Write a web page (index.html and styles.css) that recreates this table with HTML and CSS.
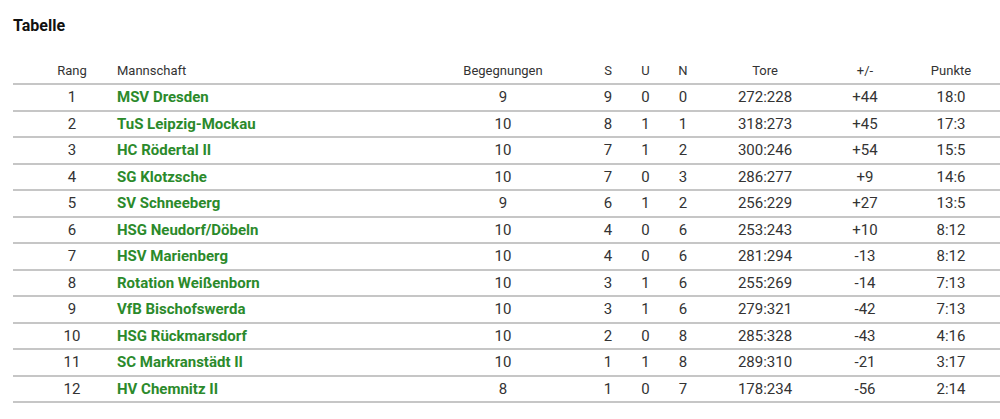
FILE: index.html
```html
<!DOCTYPE html>
<html lang="de">
<head>
<meta charset="utf-8">
<title>Tabelle</title>
<link rel="stylesheet" href="styles.css">
</head>
<body>
<div class="page">
  <h2 class="title">Tabelle</h2>
  <table class="standings">
    <colgroup>
      <col class="c-rank"><col class="c-team"><col class="c-games"><col class="c-s"><col class="c-u"><col class="c-n"><col class="c-goals"><col class="c-diff"><col class="c-pts">
    </colgroup>
    <thead>
      <tr>
        <th class="rank">Rang</th>
        <th class="team">Mannschaft</th>
        <th class="games">Begegnungen</th>
        <th>S</th>
        <th>U</th>
        <th>N</th>
        <th>Tore</th>
        <th>+/-</th>
        <th>Punkte</th>
      </tr>
    </thead>
    <tbody>
      <tr><td class="rank">1</td><td class="team">MSV Dresden</td><td class="games">9</td><td>9</td><td>0</td><td>0</td><td>272:228</td><td>+44</td><td>18:0</td></tr>
      <tr><td class="rank">2</td><td class="team">TuS Leipzig-Mockau</td><td class="games">10</td><td>8</td><td>1</td><td>1</td><td>318:273</td><td>+45</td><td>17:3</td></tr>
      <tr><td class="rank">3</td><td class="team">HC Rödertal II</td><td class="games">10</td><td>7</td><td>1</td><td>2</td><td>300:246</td><td>+54</td><td>15:5</td></tr>
      <tr><td class="rank">4</td><td class="team">SG Klotzsche</td><td class="games">10</td><td>7</td><td>0</td><td>3</td><td>286:277</td><td>+9</td><td>14:6</td></tr>
      <tr><td class="rank">5</td><td class="team">SV Schneeberg</td><td class="games">9</td><td>6</td><td>1</td><td>2</td><td>256:229</td><td>+27</td><td>13:5</td></tr>
      <tr><td class="rank">6</td><td class="team">HSG Neudorf/Döbeln</td><td class="games">10</td><td>4</td><td>0</td><td>6</td><td>253:243</td><td>+10</td><td>8:12</td></tr>
      <tr><td class="rank">7</td><td class="team">HSV Marienberg</td><td class="games">10</td><td>4</td><td>0</td><td>6</td><td>281:294</td><td>-13</td><td>8:12</td></tr>
      <tr><td class="rank">8</td><td class="team">Rotation Weißenborn</td><td class="games">10</td><td>3</td><td>1</td><td>6</td><td>255:269</td><td>-14</td><td>7:13</td></tr>
      <tr><td class="rank">9</td><td class="team">VfB Bischofswerda</td><td class="games">10</td><td>3</td><td>1</td><td>6</td><td>279:321</td><td>-42</td><td>7:13</td></tr>
      <tr><td class="rank">10</td><td class="team">HSG Rückmarsdorf</td><td class="games">10</td><td>2</td><td>0</td><td>8</td><td>285:328</td><td>-43</td><td>4:16</td></tr>
      <tr><td class="rank">11</td><td class="team">SC Markranstädt II</td><td class="games">10</td><td>1</td><td>1</td><td>8</td><td>289:310</td><td>-21</td><td>3:17</td></tr>
      <tr><td class="rank">12</td><td class="team">HV Chemnitz II</td><td class="games">8</td><td>1</td><td>0</td><td>7</td><td>178:234</td><td>-56</td><td>2:14</td></tr>
    </tbody>
  </table>
</div>
</body>
</html>
```

FILE: styles.css
```css
html, body {
  margin: 0;
  padding: 0;
  background: #ffffff;
}

body {
  font-family: Roboto, "Liberation Sans", Arial, sans-serif;
  color: #333333;
}

.page {
  padding: 16px 0 0 13px;
}

.title {
  margin: 0;
  font-size: 16px;
  line-height: 20px;
  font-weight: 700;
  color: #111111;
}

.standings {
  margin-top: 21px;
  width: 987px;
  table-layout: fixed;
  border-collapse: collapse;
}

.c-rank { width: 104px; }
.c-team { width: 328px; }
.c-games { width: 144px; }
.c-s { width: 38px; }
.c-u { width: 37px; }
.c-n { width: 38px; }
.c-goals { width: 126px; }
.c-diff { width: 74px; }
.c-pts { width: 98px; }

.standings th,
.standings td {
  padding: 0;
  text-align: center;
  white-space: nowrap;
}

.standings th {
  font-size: 13px;
  font-weight: 400;
  color: #333333;
  height: 26px;
  border-bottom: 2px solid #c6c6c6;
}

.standings td {
  font-size: 15px;
  height: 24.5px;
  border-bottom: 2px solid #c6c6c6;
}

.standings .rank {
  padding-left: 14px;
}

.standings .team {
  text-align: left;
}

.standings td.team {
  font-weight: 700;
  color: #2b8a2b;
}

.standings .games {
  padding-right: 28px;
}
```
